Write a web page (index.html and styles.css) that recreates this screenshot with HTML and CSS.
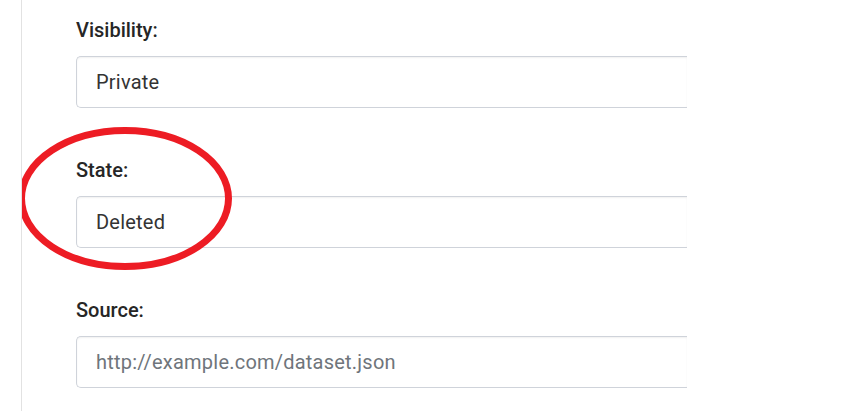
FILE: index.html
```html
<!DOCTYPE html>
<html>
<head>
<meta charset="utf-8">
<link rel="stylesheet" href="styles.css">
</head>
<body>
<div class="page">
  <form class="form">
    <div class="group">
      <label class="label">Visibility:</label>
      <div class="field"><span class="value">Private</span></div>
    </div>
    <div class="group">
      <label class="label">State:</label>
      <div class="field"><span class="value">Deleted</span></div>
    </div>
    <div class="group">
      <label class="label">Source:</label>
      <div class="field"><span class="placeholder">http://example.com/dataset.json</span></div>
    </div>
  </form>
  <svg class="circle" width="220" height="150" viewBox="0 0 220 150">
    <ellipse cx="107" cy="71.5" rx="103.5" ry="68" fill="none" stroke="#ed1c24" stroke-width="7"/>
  </svg>
</div>
</body>
</html>
```
FILE: styles.css
```css
html, body {
  margin: 0;
  padding: 0;
  background: #fff;
}
.page {
  position: relative;
  height: 411px;
  margin-left: 21px;
  border-left: 1px solid #e2e2e2;
  padding-left: 54px;
  font-family: Roboto, "Liberation Sans", sans-serif;
  overflow: hidden;
}
.form {
  padding-top: 17px;
  width: 611px;
}
.group {
  margin-bottom: 49px;
}
.label {
  display: block;
  font-size: 20px;
  line-height: 26px;
  font-weight: 500;
  color: #262626;
  margin-bottom: 13px;
}
.field {
  box-sizing: border-box;
  height: 52px;
  border: 1px solid #cfd3da;
  border-right: none;
  border-radius: 5px 0 0 5px;
  box-shadow: inset 0 1px 2px rgba(0,0,0,0.06);
  display: flex;
  align-items: center;
  padding-left: 19px;
  font-size: 20px;
  letter-spacing: 0.22px;
}
.value {
  color: #333;
}
.placeholder {
  color: #6f757b;
}
.circle {
  position: absolute;
  left: -4px;
  top: 127px;
}
```
